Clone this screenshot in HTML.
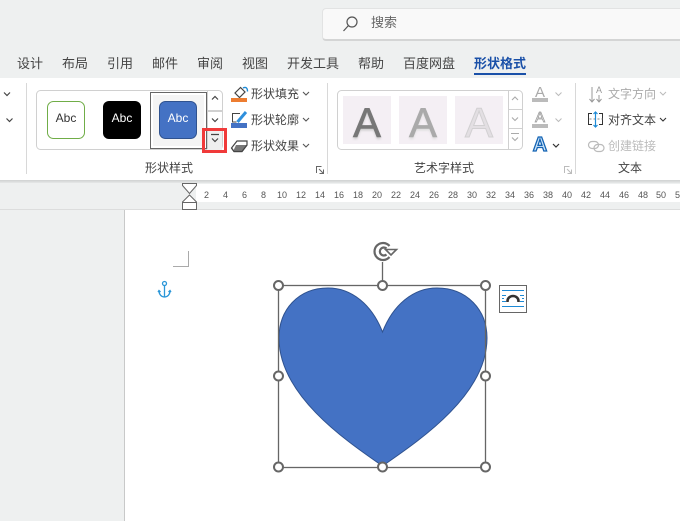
<!DOCTYPE html>
<html lang="zh"><head><meta charset="utf-8"><style>
html,body{margin:0;padding:0;width:680px;height:521px;overflow:hidden;background:#fff}
body{position:relative;font-family:"Liberation Sans","Noto Sans CJK SC",sans-serif;color:#444}
.a{position:absolute;white-space:nowrap}
.t{position:absolute;white-space:nowrap;font-size:13px;line-height:18px;top:55px;color:#444}
.r{position:absolute;white-space:nowrap;font-size:12px;line-height:16px;color:#444}
.n{position:absolute;top:190px;width:20px;text-align:center;font-size:9px;line-height:10px;color:#555}
</style></head><body>
<div class="a" style="left:0;top:0;width:680px;height:78px;background:#eef0f0"></div>
<div class="a" style="left:322px;top:8px;width:358px;height:30px;background:#f9f9f9;border:1px solid #e2e3e3;border-bottom:2px solid #d4d5d5;border-right:0;border-radius:4px 0 0 4px"></div>
<svg class="a" style="left:342px;top:15px" width="18" height="18" fill="none" stroke="#555" stroke-width="1.2"><circle cx="10" cy="7" r="5"/><path d="M6.500 10.500L1.500 16"/></svg>
<div class="a" style="left:371px;top:14px;font-size:13px;line-height:18px;color:#666">搜索</div>
<div class="t" style="left:17px">设计</div><div class="t" style="left:62px">布局</div><div class="t" style="left:107px">引用</div><div class="t" style="left:152px">邮件</div><div class="t" style="left:197px">审阅</div><div class="t" style="left:242px">视图</div><div class="t" style="left:287px">开发工具</div><div class="t" style="left:358px">帮助</div><div class="t" style="left:403px">百度网盘</div>
<div class="t" style="left:474px;font-weight:bold;color:#1a50a8">形状格式</div>
<div class="a" style="left:474px;top:73px;width:52px;height:2px;background:#1a50a8"></div>

<div class="a" style="left:0;top:78px;width:680px;height:102px;background:#fff"></div>
<div class="a" style="left:0;top:180px;width:680px;height:3px;background:linear-gradient(#cfd1d1,#e6e8e8)"></div>
<div class="a" style="left:0;top:183px;width:680px;height:27px;background:#eef0f0"></div>
<div class="a" style="left:196px;top:184px;width:484px;height:18px;background:#fff"></div>
<div class="a" style="left:0;top:209px;width:680px;height:1px;background:#dcdddd"></div>
<div class="a" style="left:0;top:210px;width:125px;height:311px;background:#eef0f0"></div>
<div class="a" style="left:124px;top:210px;width:1px;height:311px;background:#c8c9c9"></div>

<div class="a" style="left:26px;top:83px;width:1px;height:91px;background:#d8d8d8"></div>
<div class="a" style="left:327px;top:83px;width:1px;height:91px;background:#d8d8d8"></div>
<div class="a" style="left:575px;top:83px;width:1px;height:91px;background:#d8d8d8"></div>

<svg class="a" style="left:0;top:78px" width="680" height="102" fill="none">
<path d="M4 14.500l3 3 3-3M6.500 40.500l3 3 3-3" stroke="#444" stroke-width="1.200"/>
<rect x="36.500" y="12.500" width="186" height="59" rx="4" stroke="#d0d0d0"/>
<rect x="153" y="17" width="51" height="51" fill="#f4f4f4"/>
<rect x="150.500" y="14.500" width="56" height="56" stroke="#666"/>
<rect x="47.500" y="23.500" width="37" height="37" rx="6" stroke="#70ad47" fill="#fff"/>
<rect x="103" y="23" width="38" height="38" rx="6" fill="#000"/>
<rect x="159.500" y="23.500" width="37" height="37" rx="6" stroke="#2f528f" fill="#4472c4"/>
<rect x="207" y="52" width="15" height="20" fill="#efefef"/>
<path d="M207.500 13v58M207.500 32.500h15M207.500 33.500h15M207.500 51.500h15" stroke="#d0d0d0"/>
<path d="M212 21.500l3-3 3 3M212 40.500l3 3 3-3M211 56.500h8M212 60.500l3 3 3-3" stroke="#444" stroke-width="1.200"/>
<rect x="203.500" y="51.500" width="22" height="22" stroke="#f03a3a" stroke-width="3"/>

<path d="M240.500 9.500l-5.500 5.500 4.500 4.500 5.500-5.500z" stroke="#444" stroke-width="1.200"/><path d="M243 10c3-1.500 4.500 0 4.500 3.500" stroke="#1d8ad6" stroke-width="1.400"/>
<rect x="231" y="20" width="16" height="4" fill="#ed7d31"/>
<path d="M240 35.500h-7.500V44h4" stroke="#444"/><path d="M237.500 44l8.500-10" stroke="#2f8fdc" stroke-width="3"/>
<rect x="231" y="45" width="16" height="5" fill="#4472c4"/>
<path d="M231.500 70l5.500-7h10v4l-5 6.500h-8z" fill="#fff" stroke="#444" stroke-width="1.200"/><path d="M236 67h11v1l-5 5.500h-9z" fill="#777"/><path d="M231.500 70l2.500 3.500h8l5-6.500" stroke="#444" stroke-width="1.200"/>
<path d="M303 14l3 3 3-3M303 40l3 3 3-3M303 66l3 3 3-3" stroke="#555" stroke-width="1.100"/>
<path d="M316.500 95v-6.500h5M319 91l4 4M323.500 91.500v4h-4" stroke="#666"/>

<rect x="337.500" y="12.500" width="185" height="59" rx="4" stroke="#d0d0d0"/>
<rect x="343" y="18" width="48" height="48" fill="#f4eff4"/><rect x="399" y="18" width="48" height="48" fill="#f4eff4"/><rect x="455" y="18" width="48" height="48" fill="#f4eff4"/>
<path d="M508.500 13v58M508.500 31.500h14M508.500 50.500h14" stroke="#d0d0d0"/>
<path d="M512 22l3-3 3 3M512 39.500l3 3 3-3M511 55.500h8M512 59.500l3 3 3-3" stroke="#aaa" stroke-width="1.100"/>

<rect x="532" y="20" width="16" height="4" fill="#bbb"/><rect x="532" y="46" width="16" height="4" fill="#bbb"/>
<path d="M555.500 14.500l3 3 3-3M555.500 40.500l3 3 3-3" stroke="#bbb"/><path d="M553 66l3 3 3-3" stroke="#333" stroke-width="1.200"/>
<path d="M592 9v15M589.500 21l2.500 3 2.500-3M599 17v7M596.500 21l2.500 3 2.500-3" stroke="#999"/>
<path d="M592 35.500h-3.500v11h3.500M599 35.500h3.500v11H599" stroke="#333"/><path d="M589.500 41h13" stroke="#888" stroke-dasharray="2 2"/><path d="M595.500 34v15M593.500 36l2-2 2 2M593.500 47l2 2 2-2" stroke="#1d8ad6" stroke-width="1.200"/>
<rect x="588.500" y="63.500" width="10" height="7" rx="3.500" stroke="#bbb" stroke-width="1.200"/><rect x="594" y="66.500" width="10" height="7" rx="3.500" stroke="#bbb" stroke-width="1.200"/>
<path d="M660 14l3 3 3-3" stroke="#bbb"/><path d="M660 40l3 3 3-3" stroke="#333" stroke-width="1.100"/>
<path d="M564.500 95v-6.500h5M567 91l4 4M571.500 91.500v4h-4" stroke="#bbb"/>
</svg>

<div class="a" style="left:47px;top:111px;width:38px;text-align:center;font-size:12px;line-height:14px;color:#333">Abc</div>
<div class="a" style="left:103px;top:111px;width:38px;text-align:center;font-size:12px;line-height:14px;color:#fff">Abc</div>
<div class="a" style="left:159px;top:111px;width:38px;text-align:center;font-size:12px;line-height:14px;color:#fff">Abc</div>

<div class="r" style="left:251px;top:86px">形状填充</div>
<div class="r" style="left:251px;top:112px">形状轮廓</div>
<div class="r" style="left:251px;top:138px">形状效果</div>
<div class="r" style="left:145px;top:160px">形状样式</div>
<div class="r" style="left:414px;top:160px">艺术字样式</div>
<div class="r" style="left:618px;top:160px">文本</div>
<div class="r" style="left:608px;top:86px;color:#aaa">文字方向</div>
<div class="r" style="left:608px;top:112px">对齐文本</div>
<div class="r" style="left:608px;top:138px;color:#bbb">创建链接</div>

<div class="a" style="left:343px;top:98px;width:48px;text-align:center;font-size:42px;line-height:49px;color:#777;-webkit-text-stroke:.6px #777;text-shadow:0 2px 2px #ccc">A</div>
<div class="a" style="left:399px;top:98px;width:48px;text-align:center;font-size:42px;line-height:49px;color:#aaa;-webkit-text-stroke:.6px #aaa;text-shadow:0 2px 2px #ddd">A</div>
<div class="a" style="left:455px;top:98px;width:48px;text-align:center;font-size:42px;line-height:49px;color:#e3dfe3;-webkit-text-stroke:1px #d2d0d2">A</div>
<div class="a" style="left:532px;top:84px;width:16px;text-align:center;font-size:15px;line-height:18px;color:#aaa">A</div>
<div class="a" style="left:532px;top:109px;width:16px;text-align:center;font-size:15px;line-height:18px;color:#e8e8e8;-webkit-text-stroke:.7px #999">A</div>
<div class="a" style="left:530px;top:136px;width:20px;text-align:center;font-size:20px;line-height:19px;font-weight:bold;color:#cfe6fa;-webkit-text-stroke:1.300px #1464b4">A</div>
<div class="a" style="left:596px;top:85px;font-size:9px;line-height:10px;color:#999">A</div>

<svg class="a" style="left:181px;top:182px" width="18" height="28" fill="#fff" stroke="#666"><path d="M1.500 1.500h14v2l-7 8-7-8z"/><path d="M8.500 13l7 7v7.500h-14V20zM1.500 20.500h14"/></svg>
<div class="n" style="left:196.500px">2</div><div class="n" style="left:215.500px">4</div><div class="n" style="left:234.500px">6</div><div class="n" style="left:253.500px">8</div><div class="n" style="left:272px">10</div><div class="n" style="left:291px">12</div><div class="n" style="left:310px">14</div><div class="n" style="left:329px">16</div><div class="n" style="left:348px">18</div><div class="n" style="left:367px">20</div><div class="n" style="left:386px">22</div><div class="n" style="left:405px">24</div><div class="n" style="left:424px">26</div><div class="n" style="left:443px">28</div><div class="n" style="left:462px">30</div><div class="n" style="left:481px">32</div><div class="n" style="left:500px">34</div><div class="n" style="left:519px">36</div><div class="n" style="left:538px">38</div><div class="n" style="left:557px">40</div><div class="n" style="left:576px">42</div><div class="n" style="left:595px">44</div><div class="n" style="left:614px">46</div><div class="n" style="left:633px">48</div><div class="n" style="left:651px">50</div><div class="n" style="left:670px">52</div>

<svg class="a" style="left:0;top:0" width="680" height="521" fill="none">
<path d="M173 266.500h15.500V251" stroke="#aaa"/>
<g stroke="#2a96d8" stroke-width="1.300"><circle cx="164.500" cy="283.500" r="2"/><path d="M164.500 285.500v11.500M159 291c0 3.500 2.500 6 5.500 6s5.500-2.500 5.500-6M158 292l1-1.500 1.500 1.500M168.500 292l1.500-1.500 1 1.500"/></g>
<path d="M382.500 332C372 305 352 288 328 288C298 288 279 310 279 338C279 395 345 440 382.500 466C420 440 487 395 487 338C487 310 467 288 437 288C413 288 393 305 382.500 332Z" fill="#4472c4" stroke="#2f528f"/>
<rect x="278.500" y="285.500" width="207" height="182" stroke="#666" stroke-width="1.300"/>
<path d="M382.500 262v23" stroke="#666" stroke-width="1.300"/>
<g fill="#fff" stroke="#666" stroke-width="2"><circle cx="278.500" cy="285.500" r="4.500"/><circle cx="382.500" cy="285.500" r="4.500"/><circle cx="485.500" cy="285.500" r="4.500"/><circle cx="278.500" cy="376" r="4.500"/><circle cx="485.500" cy="376" r="4.500"/><circle cx="278.500" cy="467" r="4.500"/><circle cx="382.500" cy="467" r="4.500"/><circle cx="485.500" cy="467" r="4.500"/></g>
<path d="M389.500 246a8.500 8.500 0 1 0 0 11M386.500 248.500a4 4 0 1 0 0 6" stroke="#666" stroke-width="2.200"/>
<path d="M385.500 249.500h11l-5.500 5.500z" fill="#fff" stroke="#666" stroke-width="1.600"/>
<rect x="499.500" y="285.500" width="27" height="27" stroke="#666" fill="#fff"/>
<path d="M502 290.500h22M502 306.500h22" stroke="#1d8ad6"/>
<path d="M502 295.500h4M520 295.500h4M502 298.500h2M522 298.500h2M502 301.500h4M520 301.500h4" stroke="#1d8ad6"/>
<path d="M507.500 302v-1a5.500 5 0 0 1 11 0v1" stroke="#333" stroke-width="2.600"/>
</svg>
</body></html>
